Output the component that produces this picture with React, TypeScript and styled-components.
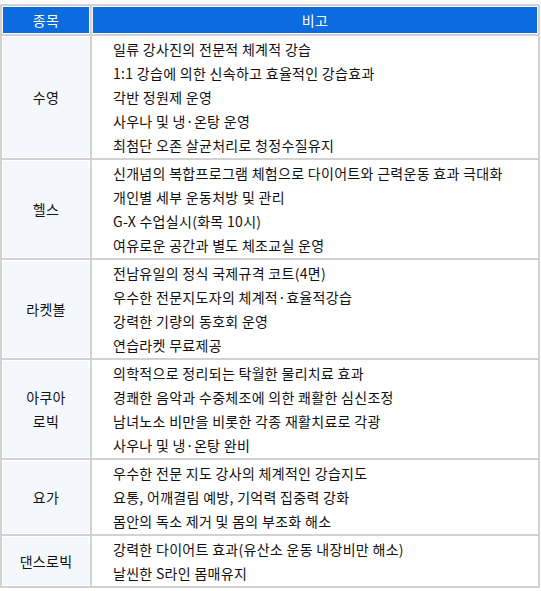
import React from 'react'
import styled, { createGlobalStyle } from 'styled-components'

const GlobalStyle = createGlobalStyle`
  body {
    margin: 0;
    background: #ffffff;
    font-family: 'Noto Sans CJK KR', 'Noto Sans', sans-serif;
  }
`

const Table = styled.table`
  width: 540px;
  margin-top: 4px;
  border-collapse: separate;
  border-spacing: 2px;
  background-color: #d2d2d2;
  font-size: 14px;
  letter-spacing: 0.3px;
  color: #111111;
`

const HeadCell = styled.th<{ $wide?: boolean }>`
  width: ${(p) => (p.$wide ? 'auto' : '86px')};
  height: 26px;
  padding: 0;
  border: 1px solid #fdf8f0;
  background-color: #0c6bde;
  color: #ffffff;
  font-weight: 400;
  text-align: center;
  line-height: 20px;
`

const NameCell = styled.td`
  padding: 0;
  border: 1px solid #ffffff;
  background-color: #f4f8fd;
  text-align: center;
  line-height: 24px;
`

const NoteCell = styled.td`
  padding: 0 0 0 20px;
  border: 1px solid #ffffff;
  background-color: #ffffff;
  line-height: 24px;
`

const Line = styled.div`
  height: 24px;
  line-height: 24px;
  white-space: nowrap;
`

interface Row {
  name: string[]
  notes: string[]
}

const rows: Row[] = [
  {
    name: ['수영'],
    notes: [
      '일류 강사진의 전문적 체계적 강습',
      '1:1 강습에 의한 신속하고 효율적인 강습효과',
      '각반 정원제 운영',
      '사우나 및 냉·온탕 운영',
      '최첨단 오존 살균처리로 청정수질유지',
    ],
  },
  {
    name: ['헬스'],
    notes: [
      '신개념의 복합프로그램 체험으로 다이어트와 근력운동 효과 극대화',
      '개인별 세부 운동처방 및 관리',
      'G-X 수업실시(화목 10시)',
      '여유로운 공간과 별도 체조교실 운영',
    ],
  },
  {
    name: ['라켓볼'],
    notes: [
      '전남유일의 정식 국제규격 코트(4면)',
      '우수한 전문지도자의 체계적·효율적강습',
      '강력한 기량의 동호회 운영',
      '연습라켓 무료제공',
    ],
  },
  {
    name: ['아쿠아', '로빅'],
    notes: [
      '의학적으로 정리되는 탁월한 물리치료 효과',
      '경쾌한 음악과 수중체조에 의한 쾌활한 심신조정',
      '남녀노소 비만을 비롯한 각종 재활치료로 각광',
      '사우나 및 냉·온탕 완비',
    ],
  },
  {
    name: ['요가'],
    notes: [
      '우수한 전문 지도 강사의 체계적인 강습지도',
      '요통, 어깨결림 예방, 기억력 집중력 강화',
      '몸안의 독소 제거 및 몸의 부조화 해소',
    ],
  },
  {
    name: ['댄스로빅'],
    notes: ['강력한 다이어트 효과(유산소 운동 내장비만 해소)', '날씬한 S라인 몸매유지'],
  },
]

const App: React.FC = () => {
  return (
    <>
      <GlobalStyle />
      <Table>
        <thead>
          <tr>
            <HeadCell>종목</HeadCell>
            <HeadCell $wide>비고</HeadCell>
          </tr>
        </thead>
        <tbody>
          {rows.map((row) => (
            <tr key={row.name.join('')}>
              <NameCell>
                {row.name.map((n) => (
                  <div key={n}>{n}</div>
                ))}
              </NameCell>
              <NoteCell>
                {row.notes.map((t) => (
                  <Line key={t}>{t}</Line>
                ))}
              </NoteCell>
            </tr>
          ))}
        </tbody>
      </Table>
    </>
  )
}
export default App
